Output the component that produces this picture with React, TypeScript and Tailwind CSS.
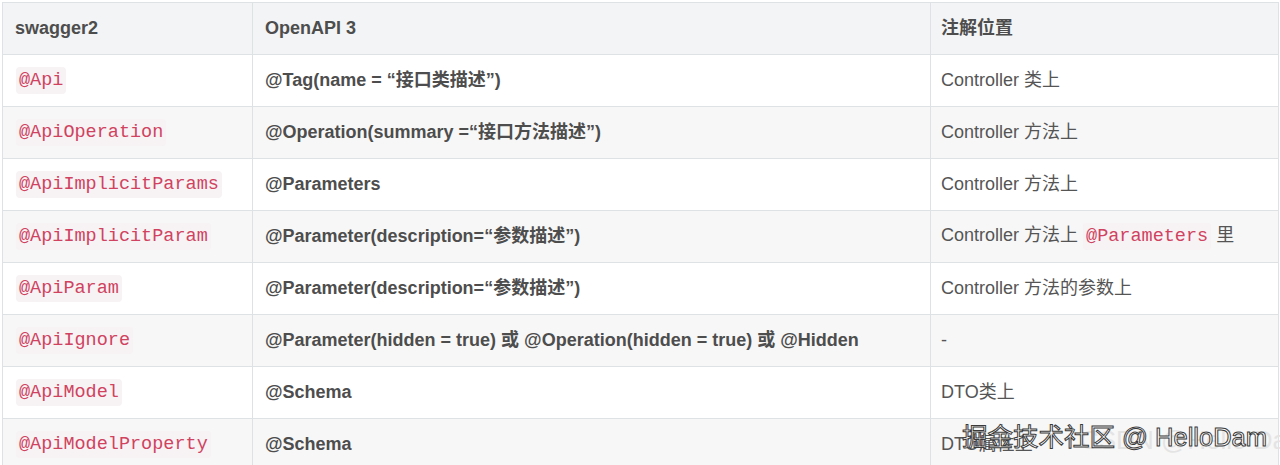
import React from 'react';

type Cell = string | { code: string } | Array<string | { code: string }>;

const rows: { s2: string; oa: string; pos: Cell }[] = [
  { s2: '@Api', oa: '@Tag(name = “接口类描述”)', pos: 'Controller 类上' },
  { s2: '@ApiOperation', oa: '@Operation(summary =“接口方法描述”)', pos: 'Controller 方法上' },
  { s2: '@ApiImplicitParams', oa: '@Parameters', pos: 'Controller 方法上' },
  {
    s2: '@ApiImplicitParam',
    oa: '@Parameter(description=“参数描述”)',
    pos: ['Controller 方法上 ', { code: '@Parameters' }, ' 里'],
  },
  { s2: '@ApiParam', oa: '@Parameter(description=“参数描述”)', pos: 'Controller 方法的参数上' },
  { s2: '@ApiIgnore', oa: '@Parameter(hidden = true) 或 @Operation(hidden = true) 或 @Hidden', pos: '-' },
  { s2: '@ApiModel', oa: '@Schema', pos: 'DTO类上' },
  { s2: '@ApiModelProperty', oa: '@Schema', pos: 'DTO属性上' },
];

const Code = ({ children }: { children: string }) => (
  <code className="rounded-sm bg-[#f7f3f4] px-[3px] py-[3px] font-['Liberation_Mono','DejaVu_Sans_Mono',monospace] text-[18.5px] text-[#d0425f]">
    {children}
  </code>
);

const renderCell = (c: Cell) => {
  if (typeof c === 'string') return c;
  if (Array.isArray(c))
    return c.map((p, i) => (typeof p === 'string' ? <span key={i}>{p}</span> : <Code key={i}>{p.code}</Code>));
  return <Code>{c.code}</Code>;
};

const App = () => {
  return (
    <div className="relative h-[465px] w-[1280px] overflow-hidden bg-white pl-[2px] pt-[2px] font-['Liberation_Sans','Noto_Sans_CJK_SC',sans-serif] text-[18px] text-[#4d4d4d]">
      <table className="w-[1276px] table-fixed border-collapse">
        <colgroup>
          <col className="w-[250px]" />
          <col className="w-[678px]" />
          <col className="w-[348px]" />
        </colgroup>
        <thead>
          <tr className="h-[52px] bg-[#f2f4f5]">
            <th className="border border-[#dfe2e5] px-3 text-left font-bold">swagger2</th>
            <th className="border border-[#dfe2e5] px-3 text-left font-bold">OpenAPI 3</th>
            <th className="border border-[#dfe2e5] px-[10px] text-left font-bold">注解位置</th>
          </tr>
        </thead>
        <tbody>
          {rows.map((r, i) => (
            <tr key={r.s2} className={i % 2 === 1 ? 'h-[52px] bg-[#f7f7f7]' : 'h-[52px] bg-white'}>
              <td className="border border-[#dfe2e5] px-[13px]">
                <Code>{r.s2}</Code>
              </td>
              <td className="border border-[#dfe2e5] px-3 font-bold">{r.oa}</td>
              <td className="border border-[#dfe2e5] px-[10px] text-[#555]">{renderCell(r.pos)}</td>
            </tr>
          ))}
        </tbody>
      </table>

      <div className="pointer-events-none absolute left-[1080px] top-[427px] whitespace-nowrap font-['Liberation_Sans',sans-serif] text-[26px] leading-none text-[#e4e4e4]">
        CSDN @Hello Dam
      </div>
      <div className="pointer-events-none absolute left-[962px] top-[425px] whitespace-nowrap font-['Liberation_Sans','Noto_Sans_CJK_SC',sans-serif] text-[25.5px] leading-none text-white [-webkit-text-stroke:1px_#3a3a3a]">
        掘金技术社区 @ HelloDam
      </div>
    </div>
  );
};

export default App;
